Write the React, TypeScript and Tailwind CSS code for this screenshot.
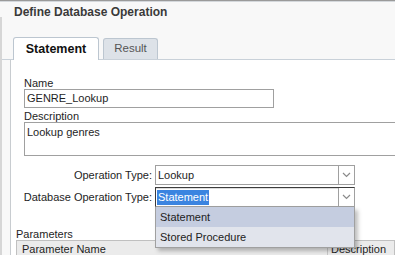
import React from "react";

function Chevron() {
  return (
    <svg width="9" height="6" viewBox="0 0 9 6" className="block">
      <polyline points="1,1 4.5,4.5 8,1" fill="none" stroke="#8a8a8a" strokeWidth="1.2" />
    </svg>
  );
}

export default function App() {
  return (
    <div className="w-[395px] h-[255px] overflow-hidden bg-[#f8f8f8] relative font-['Liberation_Sans',Arial,sans-serif] text-[11px] text-[#1e1e1e]">
      <div className="h-px bg-[#9a9a9a]" />
      <div className="h-px bg-[#d4d8dc]" />
      <div className="h-[15px] pl-[14px] pt-[3px] text-[12px] leading-[14px] font-bold text-[#3a3a3a]">
        Define Database Operation
      </div>
      <div className="border-l-2 border-[#d6d6d6] h-[240px]">
        <div className="pt-[20px] flex items-end pl-[11px] gap-[4px] border-b border-[#c9d1d9] h-[43px]">
          <div className="w-[86px] h-[23px] -mb-px bg-white border border-b-0 border-[#bcc6d0] rounded-t-[3px] flex items-center justify-center text-[12.5px] font-bold text-[#111]">
            Statement
          </div>
          <div className="w-[55px] h-[21px] bg-[#dde2e8] border border-b-0 border-[#bcc6d0] rounded-t-[3px] flex items-center justify-center text-[11.5px] text-[#555]">
            Result
          </div>
        </div>
        <div className="ml-[8px] bg-white border-l border-[#c8ccd0] h-[200px]">
          <div className="pl-[13px] pt-[17px]">
            <div className="leading-[12px] h-[12px]">Name</div>
            <div className="w-[250px] h-[19px] border border-[#a0a0a0] flex items-center pl-[2px] leading-[13px]">
              GENRE_Lookup
            </div>
            <div className="leading-[12px] h-[12px] mt-[2px]">Description</div>
            <div className="w-[380px] h-[34px] border border-[#a0a0a0] pl-[2px] pt-[3px] leading-[13px]">
              Lookup genres
            </div>
            <div className="mt-[9px] flex items-center gap-[3px]">
              <div className="w-[128px] flex justify-end whitespace-nowrap leading-[13px]">Operation Type:</div>
              <div className="w-[200px] h-[20px] border border-[#a0a0a0] flex">
                <div className="flex-1 flex items-center pl-[2px]">Lookup</div>
                <div className="w-[16px] border-l border-[#a0a0a0] flex items-center justify-center">
                  <Chevron />
                </div>
              </div>
            </div>
            <div className="mt-[2px] flex items-center gap-[3px]">
              <div className="w-[128px] flex justify-end whitespace-nowrap leading-[13px]">Database Operation Type:</div>
              <div className="w-[200px] h-[20px] border border-[#a0a0a0] border-t-[#3c3c3c] border-l-[#3c3c3c] flex">
                <div className="flex-1 flex items-center pl-[1px] border-t border-[#dcdcdc]">
                  <span className="bg-[#3b84e0] text-white px-px leading-[15px]">Statement</span>
                </div>
                <div className="w-[16px] border-l border-[#a0a0a0] flex items-center justify-center">
                  <Chevron />
                </div>
              </div>
            </div>
          </div>
          <div className="pl-[5px] mt-[21px]">
            <div className="leading-[12px] h-[12px]">Parameters</div>
            <div className="h-[20px] border border-[#c0c0c0] bg-[#ebebeb] flex">
              <div className="w-[311px] border-r border-[#c8c8c8] pl-[5px] pt-[2px] leading-[13px]">Parameter Name</div>
              <div className="pl-[3px] pt-[2px] leading-[13px]">Description</div>
            </div>
          </div>
        </div>
      </div>
      <div className="absolute left-[155px] top-[207px] w-[200px] border border-[#a0a0a0] border-t-0 shadow-[3px_3px_4px_rgba(0,0,0,0.25)] bg-[#e1e4ec] text-[#222]">
        <div className="h-[20px] bg-[#c5cde0] flex items-center pl-[4px] leading-[13px]">Statement</div>
        <div className="h-[20px] flex items-center pl-[4px] leading-[13px]">Stored Procedure</div>
      </div>
    </div>
  );
}
